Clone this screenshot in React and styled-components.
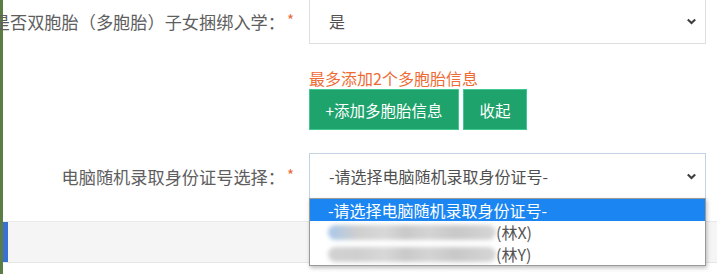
import React from 'react';
import styled, { createGlobalStyle } from 'styled-components';

const GlobalStyle = createGlobalStyle`
    html, body {
        margin: 0;
        padding: 0;
        background: #fff;
        overflow: hidden;
    }
    body {
        font-family: "Noto Sans CJK SC", "Noto Sans", sans-serif;
    }
`;

const Page = styled.div`
    display: flex;
    width: 717px;
    height: 274px;
    overflow: hidden;
`;

const SideEdge = styled.div`
    width: 3px;
    flex-shrink: 0;
    background: #5a7d44;
`;

const Main = styled.div`
    flex: 1;
    display: flex;
    flex-direction: column;
    margin-top: -2px;
`;

const FormGrid = styled.div`
    display: grid;
    grid-template-columns: 306px 397px;
    row-gap: 23px;
`;

const Label = styled.label`
    display: flex;
    align-items: center;
    justify-content: flex-end;
    padding-right: 15px;
    height: 46px;
    font-size: 17.2px;
    color: #5e5e5e;
    white-space: nowrap;
`;

const Required = styled.span`
    color: #ea6a3a;
    font-size: 15px;
    margin-left: 2px;
    position: relative;
    top: -2px;
`;

const SelectBox = styled.div`
    position: relative;
    display: flex;
    align-items: center;
    justify-content: space-between;
    box-sizing: border-box;
    height: 46px;
    padding: 0 8px 0 19px;
    border: 1px solid ${({ $focused }) => ($focused ? '#c3d3e4' : '#dedede')};
    background: #fff;
    font-size: 16px;
    color: #505050;
`;

const Chevron = () => (
    <svg width="11" height="7" viewBox="0 0 11 7">
        <path d="M1.8 1.5 L5.5 5 L9.2 1.5" fill="none" stroke="#3e3e3e" strokeWidth="2.1" />
    </svg>
);

const Extra = styled.div`
    grid-column: 2;
    display: flex;
    flex-direction: column;
    align-items: flex-start;
`;

const Hint = styled.div`
    font-size: 16px;
    line-height: 22px;
    color: #ef6b34;
`;

const ButtonRow = styled.div`
    display: flex;
    gap: 4px;
`;

const GreenButton = styled.button`
    box-sizing: border-box;
    height: 41px;
    width: ${({ $width }) => $width}px;
    padding: 0;
    border: 1px solid #3fc890;
    background: #1fa36d;
    color: #fff;
    font-family: inherit;
    font-size: 15.5px;
`;

const Dropdown = styled.ul`
    position: absolute;
    top: 100%;
    left: -1px;
    right: -1px;
    margin: 0;
    padding: 0;
    list-style: none;
    background: #fff;
    border: 1px solid #9a9a9a;
    box-shadow: 1px 2px 4px rgba(0, 0, 0, 0.25);
    z-index: 2;
`;

const Option = styled.li`
    display: flex;
    align-items: center;
    height: 22px;
    padding-left: 18px;
    font-size: 16px;
    color: ${({ $active }) => ($active ? '#fff' : '#555')};
    background: ${({ $active }) => ($active ? '#1b86f2' : 'transparent')};
`;

const Blurred = styled.span`
    display: inline-block;
    width: 168px;
    height: 15px;
    border-radius: 8px;
    filter: blur(2px);
    background: linear-gradient(
        90deg,
        ${({ $tint }) => $tint} 0%,
        #cfcfcf 18%,
        #d8d8d8 34%,
        #c9c9c9 46%,
        #d4d4d4 60%,
        #c8c8c8 76%,
        #d6d6d6 100%
    );
`;

const Band = styled.div`
    display: flex;
    margin-top: 22px;
    height: 42px;
    box-sizing: border-box;
    background: #f5f5f5;
    border-top: 1px solid #e9e9e9;
    border-bottom: 1px solid #e6e6e6;
`;

const BandMarker = styled.div`
    width: 5px;
    background: #3a6fd3;
`;

const ids = [
    { name: '(林X)', tint: '#a9c7e8' },
    { name: '(林Y)', tint: '#d2d2d2' },
];

const App = () => (
    <>
        <GlobalStyle />
        <Page>
            <SideEdge />
            <Main>
                <FormGrid>
                    <Label>
                        是否双胞胎（多胞胎）子女捆绑入学：<Required>*</Required>
                    </Label>
                    <SelectBox>
                        <span>是</span>
                        <Chevron />
                    </SelectBox>

                    <Extra>
                        <Hint>最多添加2个多胞胎信息</Hint>
                        <ButtonRow>
                            <GreenButton $width={150}>+添加多胞胎信息</GreenButton>
                            <GreenButton $width={64}>收起</GreenButton>
                        </ButtonRow>
                    </Extra>

                    <Label>
                        电脑随机录取身份证号选择：<Required>*</Required>
                    </Label>
                    <SelectBox $focused>
                        <span>-请选择电脑随机录取身份证号-</span>
                        <Chevron />
                        <Dropdown>
                            <Option $active>-请选择电脑随机录取身份证号-</Option>
                            {ids.map(({ name, tint }) => (
                                <Option key={name}>
                                    <Blurred $tint={tint} />
                                    <span>{name}</span>
                                </Option>
                            ))}
                        </Dropdown>
                    </SelectBox>
                </FormGrid>
                <Band>
                    <BandMarker />
                </Band>
            </Main>
        </Page>
    </>
);

export default App;
